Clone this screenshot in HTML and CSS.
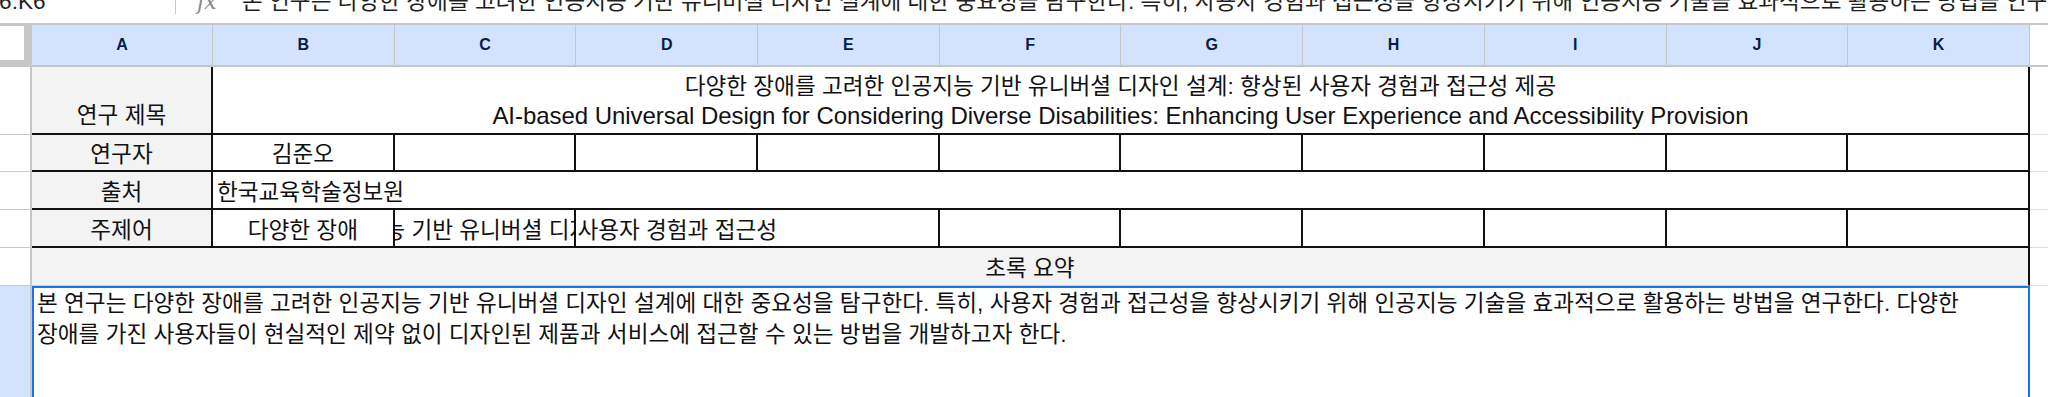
FILE: index.html
```html
<!DOCTYPE html>
<html lang="ko">
<head>
<meta charset="utf-8">
<title>Sheet</title>
<link rel="stylesheet" href="styles.css">
</head>
<body>
<div class="app">
  <div class="fbar">
    <div class="fbar-inner">
      <div class="namebox"><span class="namebox-text">A6:K6</span></div>
      <div class="divider"></div>
      <div class="fx">fx</div>
      <div class="ftext">본 연구는 다양한 장애를 고려한 인공지능 기반 유니버셜 디자인 설계에 대한 중요성을 탐구한다. 특히, 사용자 경험과 접근성을 향상시키기 위해 인공지능 기술을 효과적으로 활용하는 방법을 연구한다. 다양한 장애를 가진 사용자들이 현실적인 제약 없이 디자인된 제품과 서비스에 접근할 수 있는 방법을 개발하고자 한다.</div>
    </div>
  </div>
  <div class="sheet">
    <!-- header row -->
    <div class="corner"><div class="corner-box"></div></div>
    <div class="ch">A</div>
    <div class="ch">B</div>
    <div class="ch">C</div>
    <div class="ch">D</div>
    <div class="ch">E</div>
    <div class="ch">F</div>
    <div class="ch">G</div>
    <div class="ch">H</div>
    <div class="ch">I</div>
    <div class="ch">J</div>
    <div class="ch">K</div>
    <div class="ch ch-off"></div>

    <!-- row 1 -->
    <div class="rh"></div>
    <div class="cell label label-bottom bb">연구 제목</div>
    <div class="cell title bb br span10">
      <div class="title-ko">다양한 장애를 고려한 인공지능 기반 유니버셜 디자인 설계: 향상된 사용자 경험과 접근성 제공</div>
      <div class="title-en">AI-based Universal Design for Considering Diverse Disabilities: Enhancing User Experience and Accessibility Provision</div>
    </div>
    <div class="off"></div>

    <!-- row 2 -->
    <div class="rh"></div>
    <div class="cell label bb br">연구자</div>
    <div class="cell center bb br">김준오</div>
    <div class="cell bb br"></div>
    <div class="cell bb br"></div>
    <div class="cell bb br"></div>
    <div class="cell bb br"></div>
    <div class="cell bb br"></div>
    <div class="cell bb br"></div>
    <div class="cell bb br"></div>
    <div class="cell bb br"></div>
    <div class="cell bb br"></div>
    <div class="off"></div>

    <!-- row 3 -->
    <div class="rh"></div>
    <div class="cell label bb br">출처</div>
    <div class="cell left bb br span10">한국교육학술정보원</div>
    <div class="off"></div>

    <!-- row 4 -->
    <div class="rh"></div>
    <div class="cell label bb br">주제어</div>
    <div class="cell center bb br">다양한 장애</div>
    <div class="cell center clip bb br"><span class="nowrap shifted">인공지능 기반 유니버셜 디자인</span></div>
    <div class="cell kw bb br span2">사용자 경험과 접근성</div>
    <div class="cell bb br"></div>
    <div class="cell bb br"></div>
    <div class="cell bb br"></div>
    <div class="cell bb br"></div>
    <div class="cell bb br"></div>
    <div class="cell bb br"></div>
    <div class="off"></div>

    <!-- row 5 -->
    <div class="rh"></div>
    <div class="cell label summary br span11">초록 요약</div>
    <div class="off"></div>

    <!-- row 6 -->
    <div class="rh rh-sel"></div>
    <div class="cell abstract span11">본 연구는 다양한 장애를 고려한 인공지능 기반 유니버셜 디자인 설계에 대한 중요성을 탐구한다. 특히, 사용자 경험과 접근성을 향상시키기 위해 인공지능 기술을 효과적으로 활용하는 방법을 연구한다. 다양한 장애를 가진 사용자들이 현실적인 제약 없이 디자인된 제품과 서비스에 접근할 수 있는 방법을 개발하고자 한다.</div>
    <div class="off"></div>
  </div>
</div>
</body>
</html>
```

FILE: styles.css
```css
* { box-sizing: border-box; }
html, body {
  margin: 0;
  padding: 0;
  background: #ffffff;
  overflow: hidden;
}
body {
  font-family: "Liberation Sans", "Noto Sans CJK KR", sans-serif;
  color: #1f1f1f;
  width: 2048px;
  height: 397px;
}
.app {
  display: flex;
  flex-direction: column;
}

/* formula bar (scrolled, only lower part visible) */
.fbar {
  height: 25px;
  overflow: hidden;
  border-bottom: 2px solid #c7c7c7;
}
.fbar-inner {
  display: flex;
  align-items: flex-start;
  height: 40px;
  margin-top: -10px;
  font-size: 22.6px;
  line-height: 24px;
}
.namebox {
  width: 175px;
  flex: none;
  overflow: hidden;
  display: flex;
}
.namebox-text {
  margin-left: -16px;
  white-space: nowrap;
}
.divider {
  width: 1px;
  height: 24px;
  background: #c7c7c7;
  flex: none;
}
.fx {
  flex: none;
  width: 66px;
  padding-left: 21px;
  font-family: "DejaVu Serif", "Liberation Serif", serif;
  font-style: italic;
  color: #8a8a8a;
  font-size: 22px;
  letter-spacing: -1px;
}
.ftext {
  flex: 1;
  white-space: nowrap;
  overflow: hidden;
}

/* grid */
.sheet {
  display: grid;
  grid-template-columns: 32px 181px repeat(10, 181.7px) 1fr;
  grid-template-rows: 42px 68px 37px 38px 38px 38px 130px;
}
.corner {
  background: #c7c7c7;
  padding: 1px 8px 7px 0;
}
.corner-box {
  background: #ffffff;
  height: 100%;
}
.ch {
  background: #d3e3fd;
  border-right: 1px solid #c4c7c5;
  border-bottom: 2px solid #c4c7c5;
  display: flex;
  align-items: center;
  justify-content: center;
  font-weight: bold;
  font-size: 16px;
  color: #041e49;
}
.ch-off {
  background: #ffffff;
  border-right: none;
}
.rh {
  background: #ffffff;
  border-right: 2px solid #c7c7c7;
  border-bottom: 1px solid #c7c7c7;
}
.rh-sel {
  background: #d3e3fd;
  border-bottom: none;
}
.off {
  background: #ffffff;
  border-bottom: 1px solid #e1e1e1;
}

.cell {
  display: flex;
  align-items: center;
  font-size: 22.6px;
  color: #111111;
  background: #ffffff;
  min-width: 0;
  white-space: nowrap;
}
.bb { border-bottom: 2px solid #111111; }
.br { border-right: 2px solid #111111; }
.span10 { grid-column: span 10; }
.span11 { grid-column: span 11; }
.span2 { grid-column: span 2; }

.label {
  background: #f3f3f3;
  justify-content: center;
}
.label-bottom {
  align-items: flex-end;
  padding-bottom: 3px;
  border-right: 2px solid #111111;
}
.title {
  flex-direction: column;
  justify-content: flex-end;
  align-items: center;
  line-height: 29px;
  padding-bottom: 3px;
}
.title-ko { font-size: 22.6px; }
.title-en { font-size: 24px; letter-spacing: -0.05px; }
.center { justify-content: center; }
.left {
  justify-content: flex-start;
  padding-left: 4px;
}
.clip {
  overflow: hidden;
}
.nowrap {
  white-space: nowrap;
  flex: none;
}
.shifted {
  margin-right: 36px;
}
.kw {
  justify-content: flex-start;
  padding-left: 1px;
}
.summary {
  border-bottom: 1px solid #d0d0d0;
}
.abstract {
  align-items: flex-start;
  white-space: normal;
  word-break: keep-all;
  border: 2px solid #1a73e8;
  border-bottom: none;
  padding: 0 6px 0 3px;
  line-height: 31px;
  overflow: hidden;
}
```
